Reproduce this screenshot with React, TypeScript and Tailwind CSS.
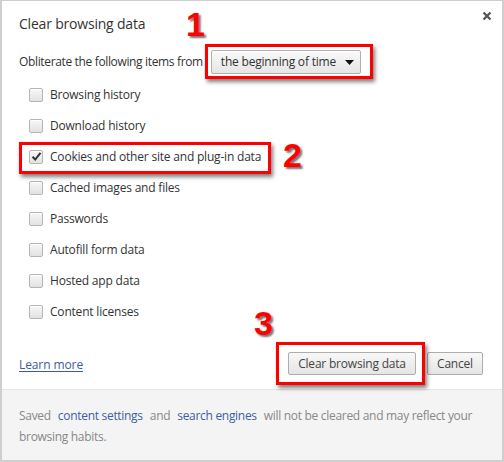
import React from "react";

const items: { label: string; checked?: boolean }[] = [
  { label: "Browsing history" },
  { label: "Download history" },
  { label: "Cookies and other site and plug-in data", checked: true },
  { label: "Cached images and files" },
  { label: "Passwords" },
  { label: "Autofill form data" },
  { label: "Hosted app data" },
  { label: "Content licenses" },
];

function Checkbox({ checked }: { checked?: boolean }) {
  return (
    <div className="w-[14px] h-[14px] rounded-[2px] border border-[#b5b5b5] bg-gradient-to-b from-[#f7f7f7] to-[#e2e2e2] flex items-center justify-center shadow-[inset_0_1px_0_#fff]">
      {checked && (
        <svg width="11" height="11" viewBox="0 0 11 11">
          <path d="M1.5 5.8 L4.2 8.5 L9.5 1.8" fill="none" stroke="#333" strokeWidth="2" />
        </svg>
      )}
    </div>
  );
}

function RedNum({ n, className }: { n: string; className: string }) {
  return (
    <div
      className={`absolute text-[#ff0000] font-bold text-[34px] leading-none font-['Liberation_Sans',sans-serif] [text-shadow:2px_2px_2px_rgba(0,0,0,0.55)] ${className}`}
    >
      {n}
    </div>
  );
}

export default function App() {
  return (
    <div className="relative w-[504px] h-[462px] bg-white border-l-2 border-r-2 border-b-2 border-t border-[#cfcfcf] font-['Open_Sans',sans-serif] text-[12px] tracking-[-0.2px] text-[#333] overflow-hidden">
      <div className="px-[17px]">
        <div className="h-[44px] flex items-center justify-between">
          <div className="text-[14px] tracking-[-0.2px] text-[#333] mt-[1px]">Clear browsing data</div>
          <svg width="10" height="10" viewBox="0 0 10 10" className="-mr-[7px] -mt-[14px]">
            <path d="M1.5 1.5 L8.5 8.5 M8.5 1.5 L1.5 8.5" stroke="#555" strokeWidth="2.3" />
          </svg>
        </div>
        <div className="h-[34px] flex items-center">
          <span className="text-[12px] tracking-[-0.35px] text-[#333] whitespace-nowrap">Obliterate the following items from</span>
          <div className="ml-[8px] w-[150px] h-[24px] rounded-[2px] border border-[#b0b0b0] bg-gradient-to-b from-[#f9f9f9] to-[#e6e6e6] flex items-center justify-between pl-[9px] pr-[6px] shadow-[inset_0_1px_0_#fff]">
            <span className="text-[12px] tracking-[-0.2px] text-[#333] whitespace-nowrap">the beginning of time</span>
            <svg width="9" height="5" viewBox="0 0 9 5">
              <path d="M0 0 L9 0 L4.5 5 Z" fill="#111" />
            </svg>
          </div>
        </div>
        <div className="flex flex-col">
          {items.map((it) => (
            <div key={it.label} className="h-[31px] flex items-center pl-[10px] gap-[7px]">
              <Checkbox checked={it.checked} />
              <span className="text-[#333] whitespace-nowrap mt-[1px]">{it.label}</span>
            </div>
          ))}
        </div>
        <div className="mt-[25px] h-[23px] flex items-center justify-between">
          <a className="text-[#3b5aa3] text-[12px] tracking-[-0.1px] underline underline-offset-2 mt-[2px]">Learn more</a>
          <div className="flex gap-[11px] pr-[2px]">
            <button className="w-[128px] h-[23px] rounded-[2px] border border-[#adadad] bg-gradient-to-b from-[#f8f8f8] to-[#e5e5e5] text-[#444] text-[12px] tracking-[-0.2px]">
              Clear browsing data
            </button>
            <button className="w-[56px] h-[23px] rounded-[2px] border border-[#adadad] bg-gradient-to-b from-[#f8f8f8] to-[#e5e5e5] text-[#444] text-[12px] tracking-[-0.2px]">
              Cancel
            </button>
          </div>
        </div>
      </div>
      <div className="absolute left-0 right-0 bottom-0 top-[388px] bg-[#f4f4f4] border-t border-[#e6e6e6] pl-[17px] pr-[10px] pt-[15px] leading-[21px] text-[12px] tracking-[-0.3px] text-[#888]">
        <div className="whitespace-nowrap">
          <span>Saved</span>
          <span className="text-[#3e5ea4] ml-[7px] mr-[7px]">content settings</span>
          <span>and</span>
          <span className="text-[#3e5ea4] ml-[7px] mr-[7px]">search engines</span>
          <span>will not be cleared and may reflect your</span>
        </div>
        <div>browsing habits.</div>
      </div>

      {/* annotation overlays */}
      <div className="absolute left-[203px] top-[43px] w-[168px] h-[35px] border-[3px] border-[#ff0000] shadow-[2px_3px_4px_rgba(0,0,0,0.5)]" />
      <div className="absolute left-[17px] top-[141px] w-[252px] h-[32px] border-[3px] border-[#ff0000] shadow-[2px_3px_4px_rgba(0,0,0,0.5)]" />
      <div className="absolute left-[274px] top-[341px] w-[149px] h-[43px] border-[3px] border-[#ff0000] shadow-[2px_3px_4px_rgba(0,0,0,0.5)]" />
      <RedNum n="1" className="left-[184px] top-[6px]" />
      <RedNum n="2" className="left-[281px] top-[137px]" />
      <RedNum n="3" className="left-[252px] top-[305px]" />
    </div>
  );
}
